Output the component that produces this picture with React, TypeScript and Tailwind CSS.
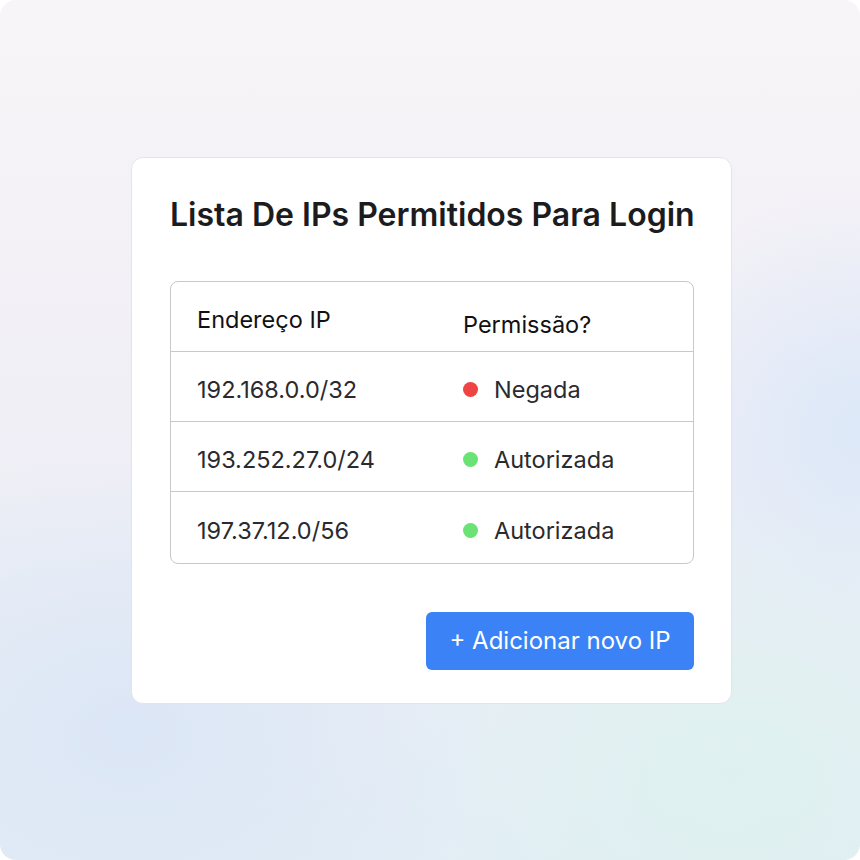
const rows = [
  { ip: "192.168.0.0/32", status: "Negada", color: "bg-[#ef4444]" },
  { ip: "193.252.27.0/24", status: "Autorizada", color: "bg-[#6ae374]" },
  { ip: "197.37.12.0/56", status: "Autorizada", color: "bg-[#6ae374]" },
];

const App = () => {
  return (
    <div className="h-[860px] w-[860px] bg-white font-['Inter',sans-serif]">
      <div className="flex h-full w-full items-start overflow-hidden rounded-2xl bg-[radial-gradient(ellipse_60%_45%_at_15%_85%,#dbe6f6_0%,transparent_70%),radial-gradient(ellipse_55%_45%_at_85%_90%,#def1ef_0%,transparent_70%),radial-gradient(ellipse_40%_40%_at_100%_50%,#dce8f8_0%,transparent_70%),linear-gradient(180deg,#f8f5f8_0%,#f1eff6_45%,#e3edf5_100%)] pl-[131px] pt-[157px]">
        <div className="w-[601px] rounded-xl border border-[#e4e4e7] bg-white pb-[33px] pl-[38px] pr-[37px] pt-[36px]">
          <h1 className="whitespace-nowrap text-[32px] font-semibold leading-[42px] text-[#1c1c1e]">
            Lista De IPs Permitidos Para Login
          </h1>
          <div className="mt-[45px] overflow-hidden rounded-lg border border-[#c9c9cc]">
            <div className="grid h-[70px] grid-cols-[292px_1fr] items-center border-b border-[#c9c9cc] text-[23.5px] text-[#111113]">
              <div className="pl-[26px] pt-[6px]">Endereço IP</div>
              <div className="pt-[16px]">Permissão?</div>
            </div>
            {rows.map((r, i) => (
              <div
                key={r.ip}
                className={`grid grid-cols-[292px_1fr] items-center pt-[6px] text-[23.5px] text-[#2a2a2f] ${
                  i < rows.length - 1 ? "h-[70px] border-b border-[#c9c9cc]" : "h-[71px]"
                }`}
              >
                <div className="pl-[26px]">{r.ip}</div>
                <div className="flex items-center gap-[16px]">
                  <span className={`h-[15px] w-[15px] rounded-full ${r.color}`} />
                  <span>{r.status}</span>
                </div>
              </div>
            ))}
          </div>
          <div className="mt-[48px] flex justify-end">
            <button className="h-[58px] w-[268px] rounded-md bg-[#3b82f6] text-[24px] text-white">
              + Adicionar novo IP
            </button>
          </div>
        </div>
      </div>
    </div>
  );
};

export default App;
